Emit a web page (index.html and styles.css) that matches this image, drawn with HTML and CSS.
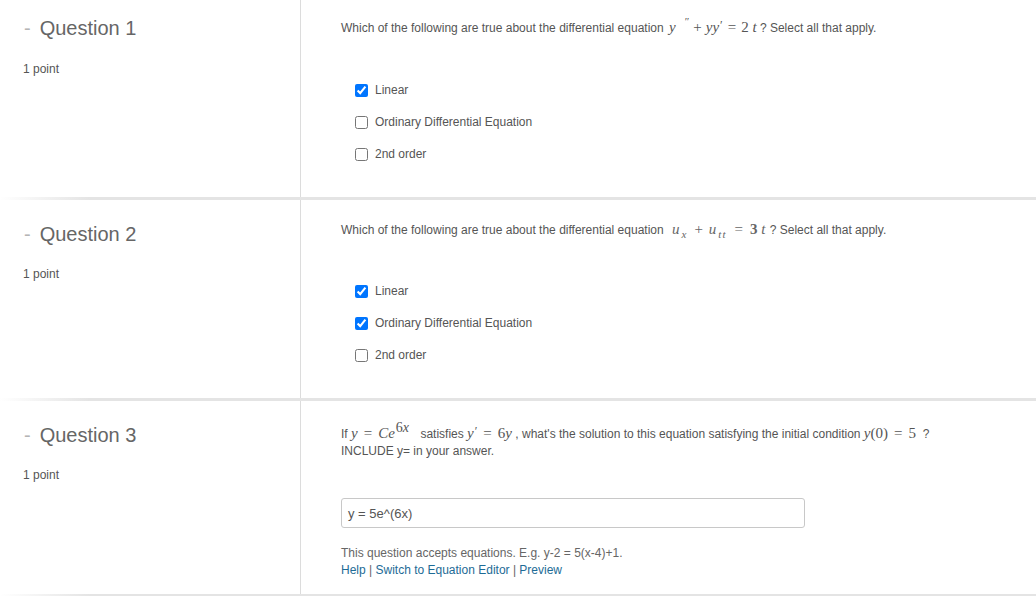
FILE: index.html
```html
<!DOCTYPE html>
<html>
<head>
<meta charset="utf-8">
<link rel="stylesheet" href="styles.css">
</head>
<body>
<div class="quiz">
  <section class="row row-1">
    <div class="meta">
      <h2 class="title"><span class="dash">-</span>Question 1</h2>
      <div class="points">1 point</div>
    </div>
    <div class="body">
      <p class="prompt">Which of the following are true about the differential equation <span class="math m1"><i>y</i><sup class="pp">″</sup><span class="bin">+</span><i>yy</i><sup class="p">′</sup><span class="rel">=</span>2 <i>t</i></span> ? Select all that apply.</p>
      <ul class="options">
        <li><input type="checkbox" checked><span>Linear</span></li>
        <li><input type="checkbox"><span>Ordinary Differential Equation</span></li>
        <li><input type="checkbox"><span>2nd order</span></li>
      </ul>
    </div>
  </section>
  <div class="sep"></div>
  <section class="row row-2">
    <div class="meta">
      <h2 class="title"><span class="dash">-</span>Question 2</h2>
      <div class="points">1 point</div>
    </div>
    <div class="body">
      <p class="prompt">Which of the following are true about the differential equation <span class="math m2"><i>u</i><sub><i>x</i></sub><span class="bin">+</span><i>u</i><sub><i>tt</i></sub><span class="rel">=</span><b>3</b> <i>t</i></span> ? Select all that apply.</p>
      <ul class="options">
        <li><input type="checkbox" checked><span>Linear</span></li>
        <li><input type="checkbox" checked><span>Ordinary Differential Equation</span></li>
        <li><input type="checkbox"><span>2nd order</span></li>
      </ul>
    </div>
  </section>
  <div class="sep"></div>
  <section class="row row-3">
    <div class="meta">
      <h2 class="title"><span class="dash">-</span>Question 3</h2>
      <div class="points">1 point</div>
    </div>
    <div class="body">
      <p class="prompt prompt-3">If <span class="math m3"><i>y</i><span class="rel">=</span><i>Ce</i><sup class="exp">6<i>x</i></sup></span> satisfies <span class="math m3"><i>y</i><sup class="p">′</sup><span class="rel">=</span>6<i>y</i></span> , what's the solution to this equation satisfying the initial condition <span class="math m3"><i>y</i>(0)<span class="rel">=</span>5</span> &nbsp;?<br>INCLUDE y= in your answer.</p>
      <div class="answer">y = 5e^(6x)</div>
      <p class="hint">This question accepts equations. E.g. y-2 = 5(x-4)+1.<br><a href="#">Help</a> | <a href="#">Switch to Equation Editor</a> | <a href="#">Preview</a></p>
    </div>
  </section>
  <div class="sep"></div>
</div>
</body>
</html>
```

FILE: styles.css
```css
html, body {
  margin: 0;
  padding: 0;
  background: #fff;
}
body {
  font-family: "Liberation Sans", Arial, sans-serif;
  color: #555;
}
.quiz {
  width: 1036px;
}
.row {
  display: flex;
}
.row-1 { height: 197px; }
.row-2 { height: 198px; }
.row-3 { height: 193px; }
.meta {
  width: 301px;
  box-sizing: border-box;
  border-right: 1px solid #dcdcdc;
  padding: 22px 0 0 23px;
  flex-shrink: 0;
}
.row-1 .meta { padding-top: 16px; }
.title {
  margin: 0;
  font-size: 20px;
  line-height: 24px;
  font-weight: normal;
  color: #666;
  padding-left: 1px;
}
.dash {
  color: #b5b5b5;
  margin-right: 9px;
}
.points {
  margin-top: 20px;
  font-size: 12px;
  line-height: 17px;
  color: #555;
}
.row-1 .points { margin-top: 21px; }
.body {
  flex: 1;
  padding: 21px 0 0 40px;
}
.row-1 .body { padding-top: 19px; }
.row-3 .body { padding-top: 25px; }
.prompt {
  margin: 0;
  font-size: 12px;
  line-height: 18px;
  color: #555;
}
.prompt-3 {
  line-height: 17px;
}
.math {
  font-family: "Liberation Serif", "Times New Roman", serif;
  font-size: 15px;
  line-height: 0;
  color: #555;
  white-space: nowrap;
}
.math i {
  font-style: italic;
}
.math sup, .math sub {
  line-height: 0;
}
.bin {
  margin: 0 4px;
}
.rel {
  margin: 0 5px;
}
.pp {
  font-size: 11px;
  vertical-align: 7px;
  margin: 0 0 0 9px;
}
.p {
  font-size: 12px;
  vertical-align: 3px;
  margin-left: 1px;
}
.m1 {
  margin-left: 2px;
}
.m2 {
  margin-left: 5px;
  color: #666;
}
.m2 .bin { margin: 0 6px; }
.m2 .rel { margin: 0 7px; }
.m2 b { font-weight: bold; }
.m2 sub {
  font-size: 11px;
  vertical-align: -4px;
  margin-left: 1px;
  letter-spacing: 1px;
}
.m2 i { margin-right: 1px; }
.m3 .rel { margin: 0 6px; }
.exp {
  font-size: 14px;
  vertical-align: 6px;
  margin: 0 8px 0 1px;
}
.options {
  list-style: none;
  margin: 36px 0 0 0;
  padding: 0;
}
.row-1 .options { margin-top: 37px; }
.options li {
  display: flex;
  align-items: center;
  height: 32px;
  font-size: 12px;
  color: #555;
  padding-left: 14px;
}
.options input {
  width: 13px;
  height: 13px;
  margin: 0 7px 0 0;
}
.answer {
  margin-top: 38px;
  width: 464px;
  height: 30px;
  box-sizing: border-box;
  border: 1px solid #c8c8c8;
  border-radius: 3px;
  padding: 0 6px;
  display: flex;
  align-items: center;
  font-size: 13px;
  color: #555;
}
.hint {
  margin: 17px 0 0 0;
  font-size: 12px;
  line-height: 17px;
  color: #666;
}
.hint a {
  color: #1d6b96;
  text-decoration: none;
}
.sep {
  height: 3px;
  background: linear-gradient(to right, #ffffff 0px, #e4e4e4 90px, #e4e4e4 100%);
}
```
